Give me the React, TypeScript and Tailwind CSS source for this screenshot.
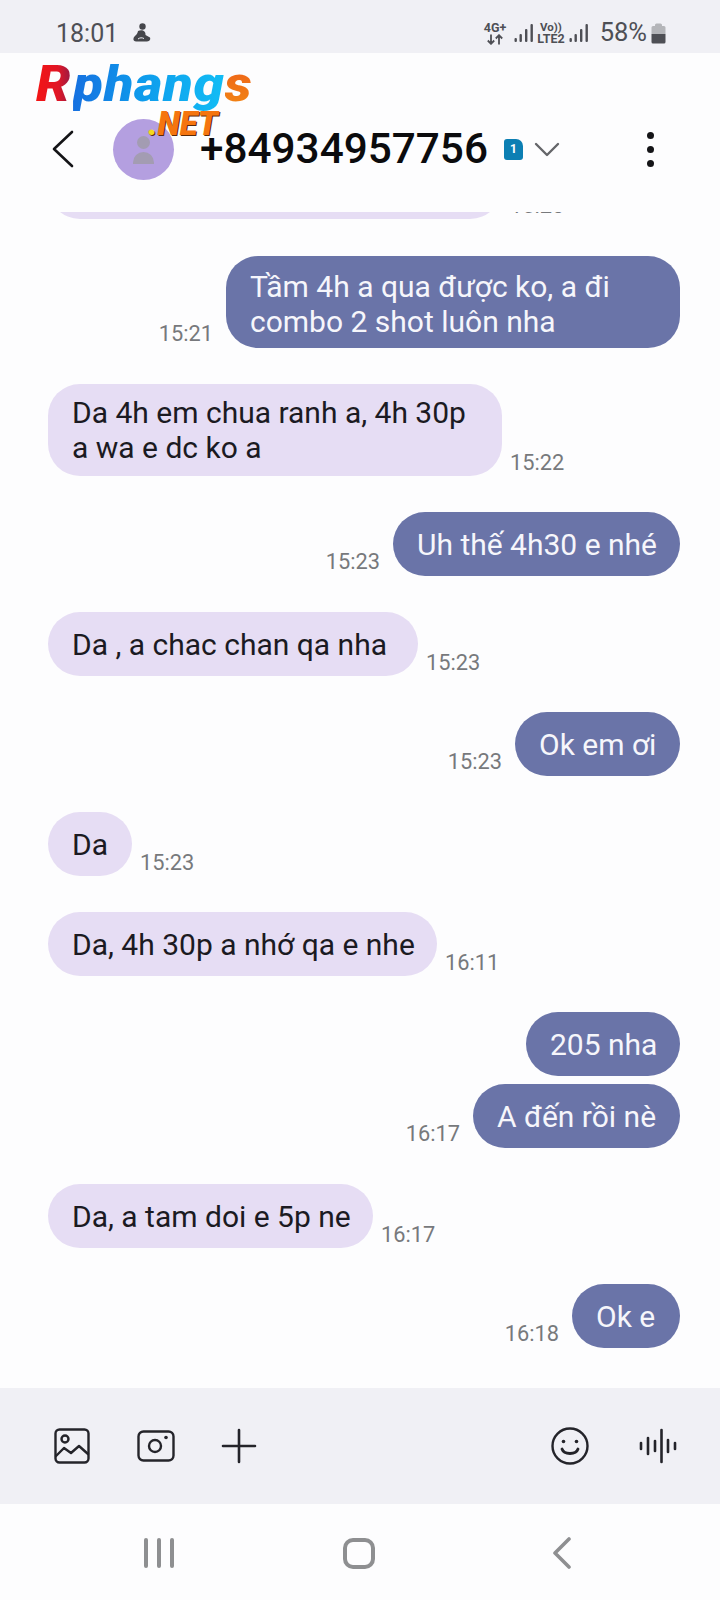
import React from "react";

const font = { fontFamily: "Roboto, sans-serif" };

function Out({ text, time, gap = "mt-[36px]", w, two }: { text: React.ReactNode; time?: string; gap?: string; w: string; two?: boolean }) {
  return (
    <div className={`flex justify-end items-end pr-10 ${gap}`}>
      {time && <span className="text-[21.8px] leading-[24px] text-[#77797c] mr-[13px] relative top-[-2px]">{time}</span>}
      <div className={`${w} min-h-[64px] flex items-center rounded-[32px] bg-[#6a74a8] text-[#f6f6fb] text-[30px] leading-[35px] px-6 ${two ? "pt-[13px] pb-[9px]" : "py-[11px]"}`}><div className="whitespace-nowrap">{text}</div></div>
    </div>
  );
}

function In({ text, time, gap = "mt-[36px]", w }: { text: React.ReactNode; time: string; gap?: string; w: string }) {
  return (
    <div className={`flex justify-start items-end pl-12 ${gap}`}>
      <div className={`${w} min-h-[64px] flex items-center rounded-[32px] bg-[#e6ddf4] text-[#1b1a22] text-[30px] leading-[35px] pl-6 pr-2 py-[11px]`}><div className="whitespace-nowrap">{text}</div></div>
      <span className="text-[21.8px] leading-[24px] text-[#77797c] ml-[8px] relative top-[-1px]">{time}</span>
    </div>
  );
}

function Bars({ cls }: { cls: string }) {
  return (
    <svg width="20" height="20" viewBox="0 0 20 20" className={cls}>
      <g fill="#4e4f55">
        <rect x="0.500" y="15" width="2.400" height="4" rx="1" />
        <rect x="5.500" y="11" width="2.400" height="8" rx="1" />
        <rect x="11" y="6" width="2.400" height="13" rx="1" />
        <rect x="16.500" y="1" width="2.400" height="18" rx="1" />
      </g>
    </svg>
  );
}

export default function App() {
  return (
    <div className="w-[720px] h-[1600px] bg-[#fdfdfe] flex flex-col overflow-hidden" style={font}>
      {/* Status bar */}
      <div className="h-[53px] bg-[#f0f0f5] flex items-center pt-[13px] pl-[56px] pr-[54px] shrink-0">
        <span className="text-[25px] text-[#4e4f55] leading-none">18:01</span>
        <svg className="ml-[15px]" width="18" height="20" viewBox="0 0 18 20">
          <circle cx="9.500" cy="3.500" r="3.200" fill="#45464b" />
          <path d="M5 8 C9 6 13 8 12.500 12 L17 14.500 C18 17 16 18.500 13 18.500 L5 18.500 C2 18.500 0 18 0.500 15.500 C1 13 4.500 12 5 8Z" fill="#45464b" />
          <path d="M5 16 C7 14.500 9 14.500 11 15.500" stroke="#f0f0f5" strokeWidth="1" fill="none" />
        </svg>
        <div className="flex-1" />
        <div className="flex flex-col items-center text-[#4e4f55] font-bold mr-[8px]">
          <span className="text-[12.5px] leading-[12px]">4G+</span>
          <svg width="16" height="11" viewBox="0 0 16 11" fill="none" stroke="#4e4f55" strokeWidth="1.800">
            <path d="M4 0.500 V9.500 M0.800 6.500 L4 9.800 L7.200 6.500 M12 10.500 V1.500 M8.800 4.500 L12 1.200 L15.200 4.500" />
          </svg>
        </div>
        <Bars cls="mr-[3px]" />
        <div className="flex flex-col items-center text-[#4e4f55] font-bold mr-[4px]">
          <span className="text-[11.5px] leading-[11px]">Vo))</span>
          <span className="text-[12.5px] leading-[12px]">LTE2</span>
        </div>
        <Bars cls="mr-[11px]" />
        <span className="text-[25.5px] text-[#4e4f55] leading-none">58%</span>
        <svg width="15" height="21" viewBox="0 0 15 21" className="ml-[4px]">
          <path d="M4 3 V2 a1.500 1.500 0 0 1 1.500-1.500 h4 A1.500 1.500 0 0 1 11 2 V3 h2 a1.500 1.500 0 0 1 1.500 1.500 V11 H.5 V4.500 A1.500 1.500 0 0 1 2 3Z" fill="#b4b5b9" />
          <path d="M.5 11 H14.500 V19 a1.500 1.500 0 0 1-1.500 1.500 H2 A1.500 1.500 0 0 1 .5 19Z" fill="#4e4f55" />
        </svg>
      </div>

      {/* Header */}
      <div className="relative h-[159px] shrink-0 flex items-center pt-[33px]">
        <svg className="ml-[51px]" width="24" height="38" viewBox="0 0 24 38">
          <path d="M21 2 L3 19 L21 36" fill="none" stroke="#141417" strokeWidth="2.600" strokeLinecap="round" strokeLinejoin="round" />
        </svg>
        <div className="ml-[38px] w-[61px] h-[61px] rounded-full bg-[#b49fe0] flex flex-col items-center justify-center">
          <span className="w-[13px] h-[13px] rounded-full bg-[#a39cb2] mt-[1px]" />
          <span className="w-[21px] h-[12px] rounded-t-full rounded-b-[5px] bg-[#a39cb2] mt-[3px]" />
        </div>
        <span className="ml-[26px] text-[42.3px] font-medium text-[#0b0b0d] leading-none">+84934957756</span>
        <div className="ml-[16px] w-[19px] h-[21px] bg-[#0c7fb3] rounded-[3px] rounded-tr-[7px] text-white text-[12px] font-bold flex items-center justify-center">1</div>
        <svg className="ml-[11px]" width="26" height="15" viewBox="0 0 26 15">
          <path d="M2 2 L13 13 L24 2" fill="none" stroke="#65666a" strokeWidth="2.400" strokeLinecap="round" strokeLinejoin="round" />
        </svg>
        <div className="ml-[87px] flex flex-col gap-[7px]">
          <span className="w-[7px] h-[7px] rounded-full bg-[#141417]" />
          <span className="w-[7px] h-[7px] rounded-full bg-[#141417]" />
          <span className="w-[7px] h-[7px] rounded-full bg-[#141417]" />
        </div>
        {/* Logo overlay */}
        <div className="absolute left-[36px] top-[5px] w-[225px] h-[85px] whitespace-nowrap">
          <span className="absolute left-0 top-[-2px] origin-left scale-x-[1.09] text-[50px] font-black italic leading-[56px] tracking-[0.6px]">
            <span className="bg-clip-text text-transparent pr-[2px]" style={{ backgroundImage: "linear-gradient(90deg,#f41414 0%,#e01626 60%,#8c1b4a 100%)" }}>R</span>
            <span className="bg-clip-text text-transparent" style={{ backgroundImage: "linear-gradient(90deg,#1670e0 0%,#0e9bec 45%,#12bdf5 100%)" }}>phang</span>
            <span className="bg-clip-text text-transparent pr-[3px]" style={{ backgroundImage: "linear-gradient(180deg,#ee5a1c 0%,#f28a12 100%)" }}>s</span>
          </span>
          <span className="absolute left-[112px] top-[50px] text-[32.5px] font-black italic leading-none text-[#f5750f]" style={{ textShadow: "1px 1px 0 #5a2a08" }}>
            <span className="text-[#f4d81e]">.</span>NET
          </span>
        </div>
      </div>

      {/* Conversation */}
      <div className="flex-1 overflow-hidden">
        <div className="flex items-end pl-12 -mt-[57px]">
          <div className="w-[454px] h-[64px] rounded-[32px] bg-[#e6ddf4]" />
          <span className="text-[21.8px] leading-[24px] text-[#77797c] ml-[8px] relative top-[-1px]">15:20</span>
        </div>
        <Out gap="mt-[37px]" w="w-[454px]" time="15:21" two text={<>Tầm 4h a qua được ko, a đi<br />combo 2 shot luôn nha</>} />
        <In w="w-[454px]" time="15:22" text={<>Da 4h em chua ranh a, 4h 30p<br />a wa e dc ko a</>} />
        <Out w="w-[287px]" time="15:23" text="Uh thế 4h30 e nhé" />
        <In w="w-[370px]" time="15:23" text="Da , a chac chan qa nha" />
        <Out w="w-[165px]" time="15:23" text="Ok em ơi" />
        <In w="w-[84px]" time="15:23" text="Da" />
        <In w="w-[389px]" time="16:11" text="Da, 4h 30p a nhớ qa e nhe" />
        <Out w="w-[154px]" text="205 nha" />
        <Out gap="mt-[8px]" w="w-[207px]" time="16:17" text="A đến rồi nè" />
        <In w="w-[325px]" time="16:17" text="Da, a tam doi e 5p ne" />
        <Out w="w-[108px]" time="16:18" text="Ok e" />
      </div>

      {/* Composer */}
      <div className="h-[116px] shrink-0 bg-[#f0f0f5] flex items-center pl-[54px] pr-[43px]">
        <svg width="36" height="36" viewBox="0 0 36 36" fill="none" stroke="#24242a" strokeWidth="2.400" strokeLinejoin="round" strokeLinecap="round">
          <rect x="1.500" y="1.500" width="33" height="33" rx="4" />
          <circle cx="11" cy="11" r="3.500" />
          <path d="M2 28 L10 20 L17 25 L25 18 L34 26" />
        </svg>
        <svg className="ml-[47px]" width="38" height="32" viewBox="0 0 38 32" fill="none" stroke="#24242a" strokeWidth="2.400">
          <rect x="1.500" y="1.500" width="35" height="29" rx="5" />
          <circle cx="18" cy="16" r="6" />
          <circle cx="29" cy="7.500" r="1.800" fill="#24242a" stroke="none" />
        </svg>
        <svg className="ml-[46px]" width="36" height="36" viewBox="0 0 36 36" fill="none" stroke="#24242a" strokeWidth="2.600" strokeLinecap="round">
          <path d="M18 2 V34 M2 18 H34" />
        </svg>
        <div className="flex-1" />
        <svg width="38" height="38" viewBox="0 0 38 38" fill="none" stroke="#24242a" strokeWidth="2.400" strokeLinecap="round">
          <circle cx="19" cy="19" r="17.500" />
          <circle cx="12.500" cy="14.500" r="1.800" fill="#24242a" stroke="none" />
          <circle cx="25.500" cy="14.500" r="1.800" fill="#24242a" stroke="none" />
          <path d="M11 22 C13 28 25 28 27 22" strokeWidth="2.800" />
        </svg>
        <svg className="ml-[50px]" width="38" height="36" viewBox="0 0 38 36" fill="none" stroke="#24242a" strokeLinecap="round" strokeWidth="2.600">
          <path d="M2 15 V21" />
          <path d="M9 10 V26" />
          <path d="M16 13 V23" />
          <path d="M22.500 2 V34" />
          <path d="M29 12 V24" />
          <path d="M36 15 V21" />
        </svg>
      </div>

      {/* Nav bar */}
      <div className="h-[96px] shrink-0 flex items-center bg-[#fdfdfe] pl-[144px] pt-[2px]">
        <div className="flex gap-[9px]">
          <span className="w-[4px] h-[30px] bg-[#8e8f91] rounded-full" />
          <span className="w-[4px] h-[30px] bg-[#8e8f91] rounded-full" />
          <span className="w-[4px] h-[30px] bg-[#8e8f91] rounded-full" />
        </div>
        <span className="ml-[169px] w-[32px] h-[31px] border-[4px] border-[#8e8f91] rounded-[10px]" />
        <svg className="ml-[177px]" width="22" height="32" viewBox="0 0 22 32" fill="none" stroke="#8e8f91" strokeWidth="3.600" strokeLinecap="round" strokeLinejoin="round">
          <path d="M17 2 L3 16 L17 30" />
        </svg>
      </div>
    </div>
  );
}
